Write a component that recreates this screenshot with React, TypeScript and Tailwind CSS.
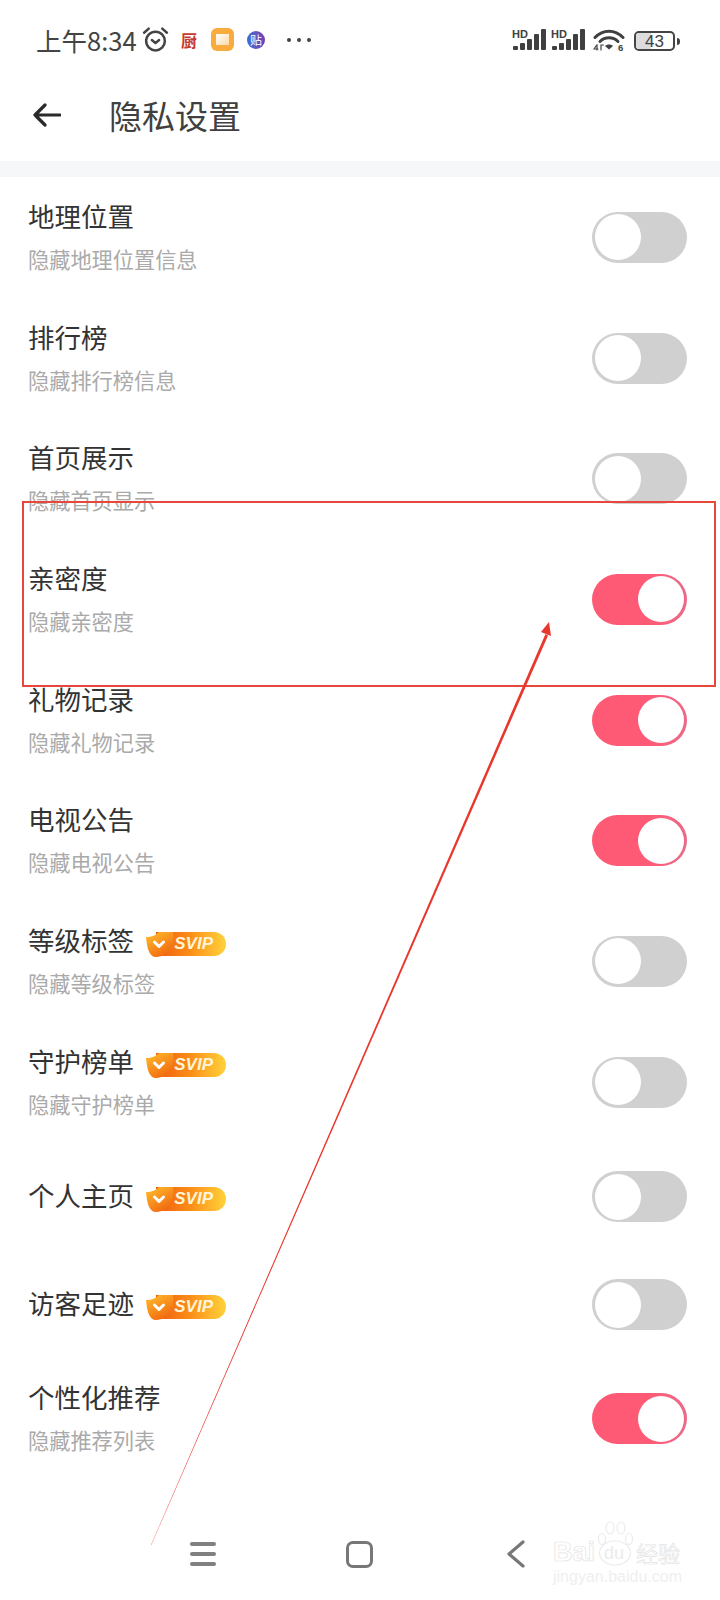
const cjk = "font-['Noto_Sans_CJK_SC',sans-serif]"

type Row = { title: string; sub?: string; on: boolean; svip?: boolean }

const rows: Row[] = [
  { title: "地理位置", sub: "隐藏地理位置信息", on: false },
  { title: "排行榜", sub: "隐藏排行榜信息", on: false },
  { title: "首页展示", sub: "隐藏首页显示", on: false },
  { title: "亲密度", sub: "隐藏亲密度", on: true },
  { title: "礼物记录", sub: "隐藏礼物记录", on: true },
  { title: "电视公告", sub: "隐藏电视公告", on: true },
  { title: "等级标签", sub: "隐藏等级标签", on: false, svip: true },
  { title: "守护榜单", sub: "隐藏守护榜单", on: false, svip: true },
  { title: "个人主页", on: false, svip: true },
  { title: "访客足迹", on: false, svip: true },
  { title: "个性化推荐", sub: "隐藏推荐列表", on: true },
]

function Signal() {
  return (
    <svg width="34" height="23" viewBox="0 0 34 23" fill="#404040">
      <text x="0" y="10" fontSize="11" fontWeight="700" fontFamily="Liberation Sans, sans-serif">HD</text>
      <rect x="1" y="18" width="5" height="4" rx="1" />
      <rect x="8" y="15" width="5" height="7" rx="1" />
      <rect x="15" y="11" width="5" height="11" rx="1" />
      <rect x="22" y="6" width="5" height="16" rx="1" />
      <rect x="29" y="1" width="5" height="21" rx="1" />
    </svg>
  )
}

function Wifi() {
  return (
    <svg width="32" height="24" viewBox="0 0 32 24" fill="none" stroke="#404040" strokeLinecap="round">
      <path d="M2 9.5 C10 1 22 1 30 9.5" strokeWidth="3" />
      <path d="M7 13.5 C12 8.5 20 8.5 25 13.5" strokeWidth="3" />
      <path d="M12 18 L16 21.5 L20 18 C18 16 14 16 12 18 Z" fill="#404040" stroke="none" />
      <path d="M3 18 L1 21 H5 M4 16.5 V22" strokeWidth="1.2" />
      <path d="M8 22 V17 H10.5" strokeWidth="1.2" />
      <text x="25" y="23" fontSize="9.5" fontWeight="700" fill="#404040" stroke="none" fontFamily="Liberation Sans, sans-serif">6</text>
    </svg>
  )
}

function Battery() {
  return (
    <div className="mt-[3px] flex items-center gap-[2px]">
      <div className="relative flex h-[20px] w-[41px] items-center justify-center overflow-hidden rounded-[5px] border-2 border-[#444]">
        <div className="absolute inset-y-0 left-0 w-[15px] bg-[#dcdcdc]" />
        <span className="relative font-['Liberation_Sans',sans-serif] text-[17px] leading-none text-[#404040]">43</span>
      </div>
      <div className="h-[7px] w-[3px] rounded-r-sm bg-[#444]" />
    </div>
  )
}

function StatusBar() {
  return (
    <div className="flex h-[80px] items-center pb-[1px] pl-[36px] pr-[40px]">
      <span className={`${cjk} w-[106px] text-[25.5px] leading-none text-[#444]`}>上午8:34</span>
      <svg width="27" height="27" viewBox="0 0 26 26" fill="none" stroke="#444" strokeWidth="2.4" strokeLinecap="round" strokeLinejoin="round">
        <circle cx="13" cy="14.5" r="9" />
        <path d="M9.5 13.5 L13 16.5 L16.5 13.5" />
        <path d="M2 6.5 L6.5 2.5 M24 6.5 L19.5 2.5" />
      </svg>
      <span className={`${cjk} ml-[12px] text-[16px] font-bold leading-none text-[#c8382f]`}>厨</span>
      <div className="ml-[14px] flex h-[23px] w-[23px] items-center justify-center rounded-[6px] bg-[#f9ab3e]">
        <div className="h-[11px] w-[13px] bg-gradient-to-br from-white to-[#fbd9a6]" />
      </div>
      <div className="ml-[13px] flex h-[18px] w-[18px] items-center justify-center rounded-full bg-gradient-to-r from-[#2b6fd8] to-[#7a3bb0]">
        <span className={`${cjk} text-[12px] leading-none text-white`}>贴</span>
      </div>
      <div className="ml-[22px] flex gap-[6px]">
        <div className="h-[4px] w-[4px] rounded-full bg-[#444]" />
        <div className="h-[4px] w-[4px] rounded-full bg-[#444]" />
        <div className="h-[4px] w-[4px] rounded-full bg-[#444]" />
      </div>
      <div className="ml-auto flex items-center">
        <Signal />
        <div className="ml-[5px]">
          <Signal />
        </div>
        <div className="ml-[8px]">
          <Wifi />
        </div>
        <div className="ml-[9px]">
          <Battery />
        </div>
      </div>
    </div>
  )
}

function SvipBadge() {
  return (
    <div className="relative ml-[12px] mt-[8px] flex h-[24px] w-[80px]">
      <div className="ml-[10px] flex flex-1 items-center justify-end rounded-r-full bg-gradient-to-r from-[#ee5a10] via-[#fb8f18] to-[#ffd23a] pr-[13px]">
        <span className="relative z-10 font-['Liberation_Sans',sans-serif] text-[17px] font-bold italic leading-none text-[#fff4d6]">SVIP</span>
      </div>
      <svg className="absolute left-0 top-0" width="30" height="25" viewBox="0 0 30 25">
        <defs>
          <linearGradient id="svip-leaf" x1="0" y1="0" x2="0.6" y2="1">
            <stop offset="0" stopColor="#ffc02e" />
            <stop offset="1" stopColor="#f26a10" />
          </linearGradient>
        </defs>
        <path d="M0 5 C6 5 10 3 13 0 L27 0 C29 10 24 25 10 25 C4 25 1 18 0 5 Z" fill="url(#svip-leaf)" />
        <path d="M8.5 10 L13 14.5 L17.5 10" fill="none" stroke="#fff" strokeWidth="3" strokeLinecap="round" strokeLinejoin="round" />
      </svg>
    </div>
  )
}

function Toggle({ on }: { on: boolean }) {
  return (
    <div
      className={`flex h-[51px] w-[95px] items-center rounded-full ${
        on
          ? "justify-end bg-gradient-to-r from-[#ff5a75] from-60% to-[#ea6a88] pr-[3px]"
          : "justify-start bg-[#d0d0d0] pl-[2.5px]"
      }`}
    >
      <div className="h-[46px] w-[46px] rounded-full bg-white" />
    </div>
  )
}

function PrivacyRow({ row }: { row: Row }) {
  return (
    <div className={`flex items-center justify-between pl-[28px] pr-[33px] ${row.sub ? "h-[120.7px]" : "h-[108px]"}`}>
      <div className={`flex flex-col gap-[12px] ${row.sub ? "mb-[3px]" : "mb-[4px]"}`}>
        <div className="flex items-center">
          <span className={`${cjk} text-[26.5px] leading-[34px] text-[#333]`}>{row.title}</span>
          {row.svip && <SvipBadge />}
        </div>
        {row.sub && <span className={`${cjk} text-[21.2px] leading-[28px] text-[#aaa]`}>{row.sub}</span>}
      </div>
      <Toggle on={row.on} />
    </div>
  )
}

function BottomNav() {
  return (
    <div className="mt-[49px] flex h-[52px] items-center pl-[190px]">
      <div className="flex w-[26px] flex-col gap-[6.5px]">
        <div className="h-[3.5px] rounded-full bg-[#808080]" />
        <div className="h-[3.5px] rounded-full bg-[#808080]" />
        <div className="h-[3.5px] rounded-full bg-[#808080]" />
      </div>
      <div className="ml-[130px] h-[27px] w-[27px] rounded-[7px] border-[3.5px] border-[#777]" />
      <svg className="ml-[134px]" width="18" height="28" viewBox="0 0 18 28" fill="none" stroke="#777" strokeWidth="3.2" strokeLinecap="round" strokeLinejoin="round">
        <path d="M16 2 L2 14 L16 26" />
      </svg>
    </div>
  )
}

// faint outlined site watermark, sits over the navigation bar corner
function Watermark() {
  const outline = "text-transparent [-webkit-text-stroke:0.7px_#e4e4e4]"
  return (
    <div className="absolute left-[553px] top-[1521px] w-[128px]">
      <div className="flex h-[45px] items-end">
        <span className={`font-['Liberation_Sans',sans-serif] ${outline} text-[27px] font-bold leading-[27px]`}>Bai</span>
        <div className="relative ml-[2px] h-[45px] w-[36px]">
          <svg className="absolute inset-0" width="36" height="45" viewBox="0 0 36 45" fill="none" stroke="#ececec" strokeWidth="1.2">
            <ellipse cx="18" cy="32" rx="15.5" ry="12" />
            <ellipse cx="5" cy="18" rx="3.5" ry="5.5" />
            <ellipse cx="13" cy="7" rx="4" ry="6" />
            <ellipse cx="24" cy="7" rx="4" ry="6" />
            <ellipse cx="32" cy="18" rx="3.5" ry="5.5" />
          </svg>
          <span className="absolute left-[7px] top-[22px] font-['Liberation_Sans',sans-serif] text-[18px] leading-[20px] text-[#ebebeb]">du</span>
        </div>
        <span className={`${cjk} ${outline} ml-[3px] text-[22px] leading-[28px]`}>经验</span>
      </div>
      <div className="mt-[2px] whitespace-nowrap font-['Liberation_Sans',sans-serif] text-[16px] leading-[18px] text-[#efefef]">jingyan.baidu.com</div>
    </div>
  )
}

export default function App() {
  return (
    <div className="relative h-[1600px] w-[720px] overflow-hidden bg-white">
      <StatusBar />
      <div className="flex h-[81px] items-center pb-[11px] pl-[33px]">
        <svg width="28" height="24" viewBox="0 0 28 24" fill="none" stroke="#2a2a2a" strokeWidth="3.2" strokeLinecap="round" strokeLinejoin="round">
          <path d="M27 12 H2 M12 2 L2 12 L12 22" />
        </svg>
        <span className={`${cjk} ml-[48px] text-[33px] leading-none text-[#404040]`}>隐私设置</span>
      </div>
      <div className="h-[16px] bg-[#f6f7f9]" />
      <div>
        {rows.map((row) => (
          <PrivacyRow key={row.title} row={row} />
        ))}
      </div>
      <BottomNav />
      <Watermark />

      {/* red highlight box and arrow drawn on top of the page */}
      <div className="absolute left-[22px] top-[501px] h-[186px] w-[694px] border-2 border-[#e8473c]" />
      <svg className="absolute inset-0" width="720" height="1600" viewBox="0 0 720 1600">
        <polygon points="151,1545 545.5,634 548,635.5 151.3,1545" fill="#e8372c" />
        <polygon points="549,622 541,632 551,636" fill="#e8372c" />
      </svg>
    </div>
  )
}
